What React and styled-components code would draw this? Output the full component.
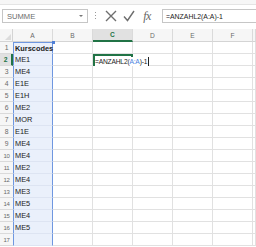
import React from "react";
import styled, { createGlobalStyle } from "styled-components";

const GlobalStyle = createGlobalStyle`
  html, body {
    margin: 0;
    padding: 0;
    background: #ffffff;
    overflow: hidden;
  }
  body {
    font-family: "Liberation Sans", Arial, sans-serif;
  }
`;

const Window = styled.div`
  width: 256px;
  height: 247px;
  display: flex;
  flex-direction: column;
  background: #ffffff;
  overflow: hidden;
`;

const TopStrip = styled.div`
  height: 4px;
  background: #f6f6f6;
  border-bottom: 1px solid #e4e4e4;
`;

const FormulaBar = styled.div`
  height: 24px;
  display: flex;
  align-items: flex-start;
  padding-top: 4px;
  box-sizing: border-box;
`;

const NameBox = styled.div`
  width: 86px;
  height: 14px;
  margin-left: 2px;
  box-sizing: border-box;
  border: 1px solid #c6c6c6;
  display: flex;
  align-items: center;
  justify-content: space-between;
  padding: 0 4px 0 4px;
  font-size: 7.6px;
  color: #6b6b6b;
`;

const Arrow = styled.span`
  width: 0;
  height: 0;
  border-left: 2px solid transparent;
  border-right: 2px solid transparent;
  border-top: 2px solid #777;
`;

const Grip = styled.div`
  width: 1px;
  height: 9px;
  margin: 3px 6px 0 7px;
  background-image: linear-gradient(#9a9a9a 50%, transparent 50%);
  background-size: 1px 3px;
`;

const IconButton = styled.div`
  width: ${(p) => p.$w}px;
  height: 14px;
  display: flex;
  align-items: center;
  justify-content: center;
  color: #6e6e6e;
`;

const FxText = styled.span`
  font-family: "Liberation Serif", "Times New Roman", serif;
  font-style: italic;
  font-size: 12px;
  color: #666;
  letter-spacing: -0.6px;
`;

const FormulaInput = styled.div`
  flex: 1;
  height: 14px;
  margin-left: 6px;
  box-sizing: border-box;
  border: 1px solid #c6c6c6;
  border-right: none;
  display: flex;
  align-items: center;
  padding-left: 3px;
  font-size: 6.9px;
  color: #222;
  white-space: nowrap;
`;

const Sheet = styled.div`
  display: grid;
  grid-template-columns: 13px repeat(6, 40px) 1fr;
  grid-template-rows: 13px;
  grid-auto-rows: 12px;
  font-size: 7.4px;
`;

const ColHeader = styled.div`
  box-sizing: border-box;
  background: ${(p) => (p.$active ? "#e1e1e1" : "#f6f6f6")};
  color: ${(p) => (p.$active ? "#217346" : "#6a6a6a")};
  font-weight: ${(p) => (p.$active ? "bold" : "normal")};
  border-right: 1px solid #dadada;
  border-bottom: ${(p) => (p.$active ? "2px solid #217346" : "1px solid #d4d4d4")};
  display: flex;
  align-items: center;
  justify-content: center;
  font-size: 6.6px;
`;

const Corner = styled.div`
  box-sizing: border-box;
  background: #f6f6f6;
  border-right: 1px solid #d4d4d4;
  border-bottom: 1px solid #d4d4d4;
  position: relative;
  &::after {
    content: "";
    position: absolute;
    right: 1px;
    bottom: 1px;
    width: 0;
    height: 0;
    border-left: 6px solid transparent;
    border-bottom: 6px solid #dcdcdc;
  }
`;

const RowHeader = styled.div`
  box-sizing: border-box;
  background: ${(p) => (p.$active ? "#e1e1e1" : "#f6f6f6")};
  color: ${(p) => (p.$active ? "#217346" : "#6a6a6a")};
  font-weight: ${(p) => (p.$active ? "bold" : "normal")};
  border-bottom: 1px solid #dadada;
  border-right: ${(p) => (p.$active ? "2px solid #217346" : "none")};
  display: flex;
  align-items: center;
  justify-content: center;
  font-size: ${(p) => (p.$small ? "6px" : "6.8px")};
  letter-spacing: -0.3px;
`;

const Cell = styled.div`
  box-sizing: border-box;
  position: relative;
  border-right: 1px solid #e1e1e1;
  border-bottom: 1px solid #e1e1e1;
  display: flex;
  align-items: center;
  padding-left: 2px;
  color: #222;
  white-space: nowrap;
`;

const RangeCell = styled(Cell)`
  background: #eaf0fb;
  border-left: 1px solid #6f97e0;
  border-right: 1px solid #6f97e0;
  border-top: ${(p) => (p.$first ? "1px solid #6f97e0" : "none")};
  border-bottom-color: #dde4f2;
  font-weight: ${(p) => (p.$bold ? "bold" : "normal")};
  padding-left: 1px;
`;

const Handle = styled.span`
  position: absolute;
  right: -3px;
  top: -2px;
  width: 3px;
  height: 3px;
  background: #4f7fd6;
`;

const ActiveCell = styled(Cell)`
  border: 2px solid #217346;
  padding-left: 0;
  overflow: visible;
  z-index: 2;
`;

const Overflow = styled.span`
  position: absolute;
  left: 0;
  top: 1px;
  height: 9px;
  display: flex;
  align-items: center;
  padding-right: 1px;
  background: #ffffff;
  color: #222;
  font-size: 6.7px;
  letter-spacing: -0.2px;
  border-right: 1px solid #222;
`;

const RefText = styled.span`
  color: #4a7fe0;
`;

const columns = ["A", "B", "C", "D", "E", "F"];
const values = [
  "Kurscodes",
  "ME1",
  "ME4",
  "E1E",
  "E1H",
  "ME2",
  "MOR",
  "E1E",
  "ME4",
  "ME4",
  "ME2",
  "ME4",
  "ME3",
  "ME5",
  "ME4",
  "ME5",
  "",
];

const XIcon = () => (
  <svg width="12" height="12" viewBox="0 0 12 12">
    <path d="M1 1 L11 11 M11 1 L1 11" stroke="#6e6e6e" strokeWidth="1.4" fill="none" />
  </svg>
);

const CheckIcon = () => (
  <svg width="12" height="12" viewBox="0 0 12 12">
    <path d="M1 6.5 L4.5 10.5 L11 1" stroke="#6e6e6e" strokeWidth="1.4" fill="none" />
  </svg>
);

const App = () => (
  <Window>
    <GlobalStyle />
    <TopStrip />
    <FormulaBar>
      <NameBox>
        SUMME
        <Arrow />
      </NameBox>
      <Grip />
      <IconButton $w={18}>
        <XIcon />
      </IconButton>
      <IconButton $w={18}>
        <CheckIcon />
      </IconButton>
      <IconButton $w={18}>
        <FxText>fx</FxText>
      </IconButton>
      <FormulaInput>=ANZAHL2(A:A)-1</FormulaInput>
    </FormulaBar>
    <Sheet>
      <Corner />
      {columns.map((c) => (
        <ColHeader key={c} $active={c === "C"}>
          {c}
        </ColHeader>
      ))}
      <ColHeader />
      {values.map((v, i) => {
        const row = i + 1;
        return (
          <React.Fragment key={row}>
            <RowHeader $active={row === 2} $small={row >= 10}>
              {row}
            </RowHeader>
            <RangeCell $first={row === 1} $bold={row === 1}>
              {v}
              {row === 1 && <Handle />}
            </RangeCell>
            <Cell />
            {row === 2 ? (
              <ActiveCell>
                <Overflow>
                  =ANZAHL2(<RefText>A:A</RefText>)-1
                </Overflow>
              </ActiveCell>
            ) : (
              <Cell />
            )}
            <Cell />
            <Cell />
            <Cell />
            <Cell />
          </React.Fragment>
        );
      })}
    </Sheet>
  </Window>
);

export default App;
